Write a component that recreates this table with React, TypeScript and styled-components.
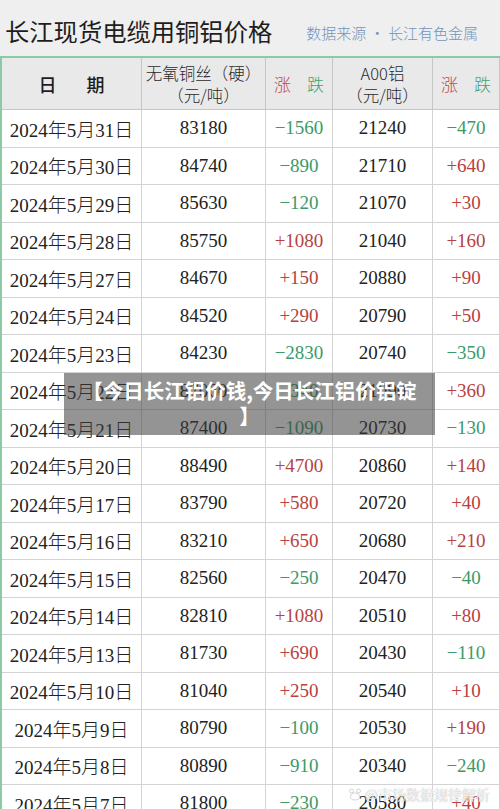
import React from 'react'
import styled, { createGlobalStyle } from 'styled-components'

const GlobalStyle = createGlobalStyle`
  html, body {
    margin: 0;
    padding: 0;
    background: #ffffff;
  }
  body {
    font-family: "Liberation Serif", "Noto Sans CJK SC", serif;
    color: #222;
  }
`

const PageStyled = styled.div`
  position: relative;
  width: 500px;
  height: 809px;
  overflow: hidden;
  background: #ffffff;
`

const TitleBarStyled = styled.header`
  height: 56px;
  background: #efefef;
  display: flex;
  align-items: center;
  justify-content: space-between;
  padding: 0 22px 0 5px;
  border-bottom: 2px solid #8ccaa6;
`

const TitleStyled = styled.h1`
  margin: 0;
  font-family: "Noto Sans CJK SC", sans-serif;
  font-weight: 400;
  font-size: 24.3px;
  letter-spacing: 0;
  color: #1d1d1d;
  padding-top: 4px;
`

const SourceStyled = styled.span`
  font-family: "Noto Sans CJK SC", sans-serif;
  font-weight: 300;
  font-size: 15px;
  color: #6f94bb;
  padding-top: 8px;
`

const TableStyled = styled.div`
  display: grid;
  grid-template-columns: 140px 124px 67px 100px 67px;
  border-left: 2px solid #8ccaa6;
`

const HeadCellStyled = styled.div`
  height: 52px;
  box-sizing: border-box;
  background: #e9e9e9;
  border-right: 1px solid #c6c6c6;
  border-bottom: 1px solid #c6c6c6;
  display: flex;
  flex-direction: column;
  align-items: center;
  justify-content: center;
  font-family: "Noto Sans CJK SC", sans-serif;
  font-weight: 300;
  font-size: 16.5px;
  line-height: 22px;
  color: #2a2a2a;
  &:last-child {
    border-right: none;
  }
`

const DateHeadStyled = styled.div`
  display: flex;
  gap: 30px;
  font-family: "Noto Sans CJK SC", sans-serif;
  font-weight: 500;
  font-size: 18px;
  color: #1d1d1d;
`

const RiseFallStyled = styled.div`
  display: flex;
  gap: 16px;
  font-size: 17px;
`

const MarkStyled = styled.span<{ $up?: boolean }>`
  color: ${p => (p.$up ? '#c0464a' : '#3fa36d')};
`

const CellStyled = styled.div<{ $tone?: 'up' | 'down' }>`
  height: 37.5px;
  box-sizing: border-box;
  border-right: 1px solid #d3d3d3;
  border-bottom: 1px solid #d3d3d3;
  display: flex;
  align-items: center;
  justify-content: center;
  font-size: 19px;
  font-weight: 300;
  white-space: nowrap;
  color: ${p => (p.$tone === 'up' ? '#b8423f' : p.$tone === 'down' ? '#3c9a68' : '#222')};
`

const OverlayStyled = styled.div`
  position: absolute;
  left: 64px;
  top: 373px;
  width: 371px;
  height: 62px;
  box-sizing: border-box;
  padding-top: 5px;
  background: rgba(60, 60, 60, 0.55);
  color: #ffffff;
  font-family: "Noto Sans CJK SC", sans-serif;
  font-weight: 700;
  font-size: 20.5px;
  line-height: 25px;
  text-align: center;
`

const WatermarkStyled = styled.div`
  position: absolute;
  right: 10px;
  top: 784px;
  display: flex;
  align-items: center;
  gap: 3px;
  font-family: "Noto Sans CJK SC", sans-serif;
  font-size: 14px;
  color: rgba(255, 255, 255, 0.85);
  text-shadow: 0 0 1px rgba(120, 120, 120, 0.7);
`

type Row = [string, string, string, string, string]

const rows: Row[] = [
  ['2024年5月31日', '83180', '−1560', '21240', '−470'],
  ['2024年5月30日', '84740', '−890', '21710', '+640'],
  ['2024年5月29日', '85630', '−120', '21070', '+30'],
  ['2024年5月28日', '85750', '+1080', '21040', '+160'],
  ['2024年5月27日', '84670', '+150', '20880', '+90'],
  ['2024年5月24日', '84520', '+290', '20790', '+50'],
  ['2024年5月23日', '84230', '−2830', '20740', '−350'],
  ['2024年5月22日', '87060', '−340', '21090', '+360'],
  ['2024年5月21日', '87400', '−1090', '20730', '−130'],
  ['2024年5月20日', '88490', '+4700', '20860', '+140'],
  ['2024年5月17日', '83790', '+580', '20720', '+40'],
  ['2024年5月16日', '83210', '+650', '20680', '+210'],
  ['2024年5月15日', '82560', '−250', '20470', '−40'],
  ['2024年5月14日', '82810', '+1080', '20510', '+80'],
  ['2024年5月13日', '81730', '+690', '20430', '−110'],
  ['2024年5月10日', '81040', '+250', '20540', '+10'],
  ['2024年5月9日', '80790', '−100', '20530', '+190'],
  ['2024年5月8日', '80890', '−910', '20340', '−240'],
  ['2024年5月7日', '81800', '−230', '20580', '+40'],
]

const tone = (v: string): 'up' | 'down' => (v.startsWith('+') ? 'up' : 'down')

const PawIcon = () => (
  <svg width="14" height="14" viewBox="0 0 14 14">
    <g fill="rgba(255,255,255,0.85)" stroke="rgba(140,140,140,0.6)" strokeWidth="0.6">
      <circle cx="3.5" cy="4" r="2" />
      <circle cx="10.5" cy="4" r="2" />
      <ellipse cx="7" cy="9.5" rx="4.5" ry="3.5" />
    </g>
  </svg>
)

const App = () => (
  <PageStyled>
    <GlobalStyle />
    <TitleBarStyled>
      <TitleStyled>长江现货电缆用铜铝价格</TitleStyled>
      <SourceStyled>数据来源 · 长江有色金属</SourceStyled>
    </TitleBarStyled>

    <TableStyled>
      <HeadCellStyled>
        <DateHeadStyled>
          <span>日</span>
          <span>期</span>
        </DateHeadStyled>
      </HeadCellStyled>
      <HeadCellStyled>
        <div>无氧铜丝（硬）</div>
        <div>（元/吨）</div>
      </HeadCellStyled>
      <HeadCellStyled>
        <RiseFallStyled>
          <MarkStyled $up>涨</MarkStyled>
          <MarkStyled>跌</MarkStyled>
        </RiseFallStyled>
      </HeadCellStyled>
      <HeadCellStyled>
        <div>A00铝</div>
        <div>（元/吨）</div>
      </HeadCellStyled>
      <HeadCellStyled>
        <RiseFallStyled>
          <MarkStyled $up>涨</MarkStyled>
          <MarkStyled>跌</MarkStyled>
        </RiseFallStyled>
      </HeadCellStyled>

      {rows.map(r => (
        <React.Fragment key={r[0]}>
          <CellStyled>{r[0]}</CellStyled>
          <CellStyled>{r[1]}</CellStyled>
          <CellStyled $tone={tone(r[2])}>{r[2]}</CellStyled>
          <CellStyled>{r[3]}</CellStyled>
          <CellStyled $tone={tone(r[4])}>{r[4]}</CellStyled>
        </React.Fragment>
      ))}
    </TableStyled>

    <OverlayStyled>
      【今日长江铝价钱,今日长江铝价铝锭
      <br />
      】
    </OverlayStyled>

    <WatermarkStyled>
      <PawIcon />
      <span>@市场数据规律解析</span>
    </WatermarkStyled>
  </PageStyled>
)

export default App
